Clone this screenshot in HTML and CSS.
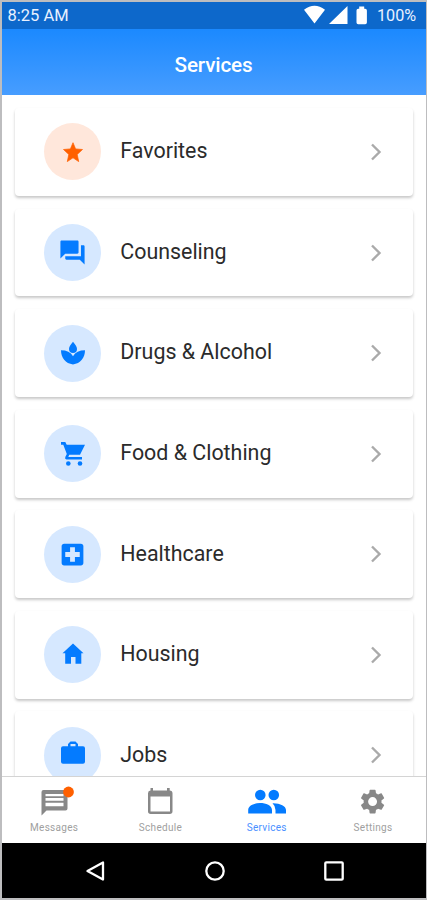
FILE: index.html
```html
<!DOCTYPE html>
<html lang="en">
<head>
<meta charset="utf-8">
<title>Services</title>
<link rel="stylesheet" href="styles.css">
</head>
<body>
<div class="phone">
  <div class="status">
    <span class="time">8:25 AM</span>
    <svg class="signals" viewBox="0 0 64 20"><path d="M0 4.8Q10.5-3.2 21 4.8L10.5 18.5ZM25 19H43.5V1ZM52.5 5.5q0-1.7 1.7-1.7h1V1.5h5v2.3h1q1.7 0 1.7 1.7v12q0 1.7-1.7 1.7h-7q-1.7 0-1.7-1.7Z"/></svg>
    <span class="battery">100%</span>
  </div>
  <header class="header"><h1>Services</h1></header>
  <main class="list">
    <div class="card"><span class="disc fav"><svg viewBox="0 0 24 24" width="24" height="24"><path stroke="currentColor" stroke-width=".7" stroke-linejoin="round" d="M12 17.800 17.700 21.600l-1.500-7.200L21.500 9.500l-6.900-.6L12 2.700 9.400 8.900l-6.900.6 5.300 4.900L6.300 21.600z"/></svg></span><span class="label">Favorites</span><svg class="chev" viewBox="0 0 12 18"><path d="m2 1.5 7.5 7.5L2 16.5"/></svg></div>
    <div class="card"><span class="disc"><svg viewBox="0 0 24 24" width="29" height="29"><path d="M21 6h-2v9H6v2c0 .55.45 1 1 1h11l4 4V7c0-.55-.45-1-1-1zm-4 6V3c0-.55-.45-1-1-1H3c-.55 0-1 .45-1 1v14l4-4h10c.55 0 1-.45 1-1z"/></svg></span><span class="label">Counseling</span><svg class="chev" viewBox="0 0 12 18"><path d="m2 1.5 7.5 7.5L2 16.5"/></svg></div>
    <div class="card"><span class="disc"><svg viewBox="0 0 24 24" width="24" height="24"><path d="M12 .8C9.8 3.6 8 5.8 8 7.9a4 4 0 0 0 8 0C16 5.8 14.200 3.600 12 .8ZM0 9.300Q8.500 9.300 12 15.200 15.500 9.300 24 9.300C24 17 19.500 22.500 12 23.500 4.500 22.500 0 17 0 9.300Z"/></svg></span><span class="label">Drugs &amp; Alcohol</span><svg class="chev" viewBox="0 0 12 18"><path d="m2 1.5 7.5 7.5L2 16.5"/></svg></div>
    <div class="card"><span class="disc"><svg viewBox="0 0 24 24" width="24" height="24"><path d="M0 0h4.300l1.400 2.800H24L19 12.800H8.300L7.300 15H21v2.400H5.500q-2-.4-1.200-2.500l1.500-2.800L2.300 2.800H0Z"/><circle cx="7.300" cy="21.500" r="2.300"/><circle cx="19" cy="21.500" r="2.300"/></svg></span><span class="label">Food &amp; Clothing</span><svg class="chev" viewBox="0 0 12 18"><path d="m2 1.5 7.5 7.5L2 16.5"/></svg></div>
    <div class="card"><span class="disc"><svg viewBox="0 0 24 24" width="29" height="29"><path d="M19 3H5c-1.100 0-2 .9-2 2v14c0 1.100.9 2 2 2h14c1.100 0 2-.9 2-2V5c0-1.100-.9-2-2-2zm-1 11h-4v4h-4v-4H6v-4h4V6h4v4h4v4z"/></svg></span><span class="label">Healthcare</span><svg class="chev" viewBox="0 0 12 18"><path d="m2 1.5 7.5 7.5L2 16.5"/></svg></div>
    <div class="card"><span class="disc"><svg viewBox="0 0 24 24" width="24" height="24"><path d="M12 .5 22.500 10.300H20.300V20.800H14.500V14H10V20.800H4.200V10.300H1.500Z"/></svg></span><span class="label">Housing</span><svg class="chev" viewBox="0 0 12 18"><path d="m2 1.5 7.5 7.5L2 16.5"/></svg></div>
    <div class="card"><span class="disc"><svg viewBox="0 0 24 24" width="24" height="24"><path transform="translate(0 -1.500)" fill-rule="evenodd" d="M9.500 0h5L17 2.500v2.300h5q2 0 2 2v13.400q0 2.100-2 2.100H2q-2 0-2-2.100V6.800q0-2 2-2h5V2.500ZM9.500 2.400v2.400h5V2.400Z"/></svg></span><span class="label">Jobs</span><svg class="chev" viewBox="0 0 12 18"><path d="m2 1.5 7.5 7.5L2 16.5"/></svg></div>
  </main>
  <nav class="tabs">
    <div class="tab"><svg viewBox="0 0 40 28"><path fill-rule="evenodd" d="M9.500 2h22q2 0 2 2v16.500q0 2-2 2H12.500L7.500 27.500V4q0-2 2-2ZM11.500 6v2.200h18V6ZM11.500 10v2.800h18V10ZM11.500 14.700v3.500h18v-3.500Z"/><circle class="dot" cx="34.500" cy="4" r="5.400"/></svg><span>Messages</span></div>
    <div class="tab"><svg viewBox="0 0 40 28"><path fill-rule="evenodd" d="M10.500 0H13V2.500H27V0h2.700V2.500q2.800.2 2.800 2.800V23.300q0 2.700-2.700 2.700H10.700Q8 26 8 23.300V5.300Q8 2.700 10.500 2.500ZM10.500 8.500v15h19.500v-15Z"/></svg><span>Schedule</span></div>
    <div class="tab on"><svg viewBox="0 0 40 28"><circle cx="13.300" cy="7" r="5.300"/><circle cx="26.800" cy="7" r="5.300"/><path d="M1.200 25.500V22C1.200 17.500 7 15 13 15S25 17.500 25 22v3.500ZM25.500 15.200C33 15 39 18 39 22v3.500H28.500V22Q28.500 18 25.500 15.200Z"/></svg><span>Services</span></div>
    <div class="tab"><svg viewBox="0 0 40 28"><g transform="translate(4.700 -1.300) scale(1.240)"><path d="M19.140 12.940c.04-.3.060-.61.060-.94 0-.32-.02-.64-.07-.94l2.030-1.580c.18-.14.230-.41.120-.61l-1.920-3.320c-.12-.22-.37-.29-.59-.22l-2.390.96c-.5-.38-1.030-.7-1.620-.94l-.36-2.540c-.04-.24-.24-.41-.48-.41h-3.840c-.24 0-.43.17-.47.41l-.36 2.540c-.59.24-1.130.57-1.620.94l-2.390-.96c-.22-.08-.47 0-.59.22L2.740 8.870c-.12.21-.08.470.12.610l2.030 1.580c-.05.3-.09.630-.09.940s.02.640.070.940l-2.030 1.580c-.18.140-.23.410-.12.610l1.920 3.320c.12.220.370.290.590.220l2.390-.96c.5.380 1.030.7 1.620.94l.36 2.540c.05.240.240.410.480.410h3.840c.24 0 .44-.17.470-.41l.36-2.540c.59-.24 1.130-.56 1.620-.94l2.390.96c.22.080.470 0 .59-.22l1.920-3.320c.12-.22.070-.47-.12-.61l-2.010-1.580zM12 15.600a3.600 3.600 0 1 1 0-7.200 3.600 3.600 0 0 1 0 7.200z"/></g></svg><span>Settings</span></div>
  </nav>
  <div class="keys">
    <svg viewBox="0 0 24 24"><path d="M20 3.500v17L4.500 12Z"/></svg>
    <svg viewBox="0 0 24 24"><circle cx="12" cy="12" r="8.700"/></svg>
    <svg viewBox="0 0 24 24"><rect x="3.300" y="3.300" width="17.400" height="17.400" rx="1"/></svg>
  </div>
</div>
</body>
</html>
```
FILE: styles.css
```css
* { box-sizing: border-box; }
body { margin: 0; font-family: Roboto, sans-serif; background: #fff; }
.phone {
  width: 427px; height: 900px; overflow: hidden;
  display: flex; flex-direction: column;
  border: solid #bdbdbf; border-width: 2px 1px 2px 2px;
}
.status {
  height: 26.500px; flex: none; display: flex; align-items: center;
  padding: 0 8px 0 5.500px; background: #0d68cb; color: #e8f1ff; font-size: 16.500px;
}
.time { flex: 1; }
.signals { width: 64px; height: 20px; fill: #fff; margin-right: 9px; }
.battery { width: 41px; white-space: nowrap; font-size: 16.200px; }
.header {
  height: 66.500px; flex: none; display: flex; align-items: center; justify-content: center;
  background: linear-gradient(#1b89ff, #479dff); color: #fff;
}
h1 { margin: 6px 1px 0 0; font-size: 20.700px; font-weight: 500; letter-spacing: -.15px; }
.list {
  flex: 1; min-height: 0; overflow: hidden; padding: 13px 13.500px 0 12.500px;
  display: flex; flex-direction: column; gap: 12.700px;
}
.card {
  height: 87.900px; flex: none; display: flex; align-items: center;
  padding: 0 31px 0 29.500px; border-radius: 4px; background: #fff;
  box-shadow: 0 2px 3px rgba(0, 0, 0, .22);
}
.disc {
  width: 57px; height: 57px; flex: none; border-radius: 50%;
  display: flex; align-items: center; justify-content: center;
  background: #d6e8ff; color: #047bff;
}
.disc.fav { background: #ffe7db; color: #ff6000; }
.disc svg { fill: currentColor; overflow: visible; }
.label { flex: 1; padding: 0 0 2.500px 19.300px; font-size: 21.400px; color: #2b2b2b; white-space: nowrap; }
.chev { width: 12px; height: 18px; fill: none; stroke: #aaa; stroke-width: 2.400; }
.tabs {
  height: 66.500px; flex: none; display: grid; grid-template-columns: repeat(4, 106.300px);
  margin-left: -1px; border-top: 1px solid #d4d4d4; background: #fff;
}
.tab {
  display: flex; flex-direction: column; align-items: center; padding-top: 11px;
  font-size: 10px; line-height: 12px; color: #a0a0a0; letter-spacing: .3px;
}
.tab svg { width: 40px; height: 28px; fill: #888; overflow: visible; }
.tab span { margin-top: 5.500px; }
.tab.on { color: #4a90ff; }
.tab.on svg { fill: #047bff; }
.tab .dot { fill: #ff6000; }
.keys {
  flex: none; height: 55.500px; background: #000;
  display: flex; align-items: center; justify-content: space-between; padding: 1px 80px 0 81px;
}
.keys svg { width: 24px; height: 24px; fill: none; stroke: #fff; stroke-width: 2.300; stroke-linejoin: round; }
```
